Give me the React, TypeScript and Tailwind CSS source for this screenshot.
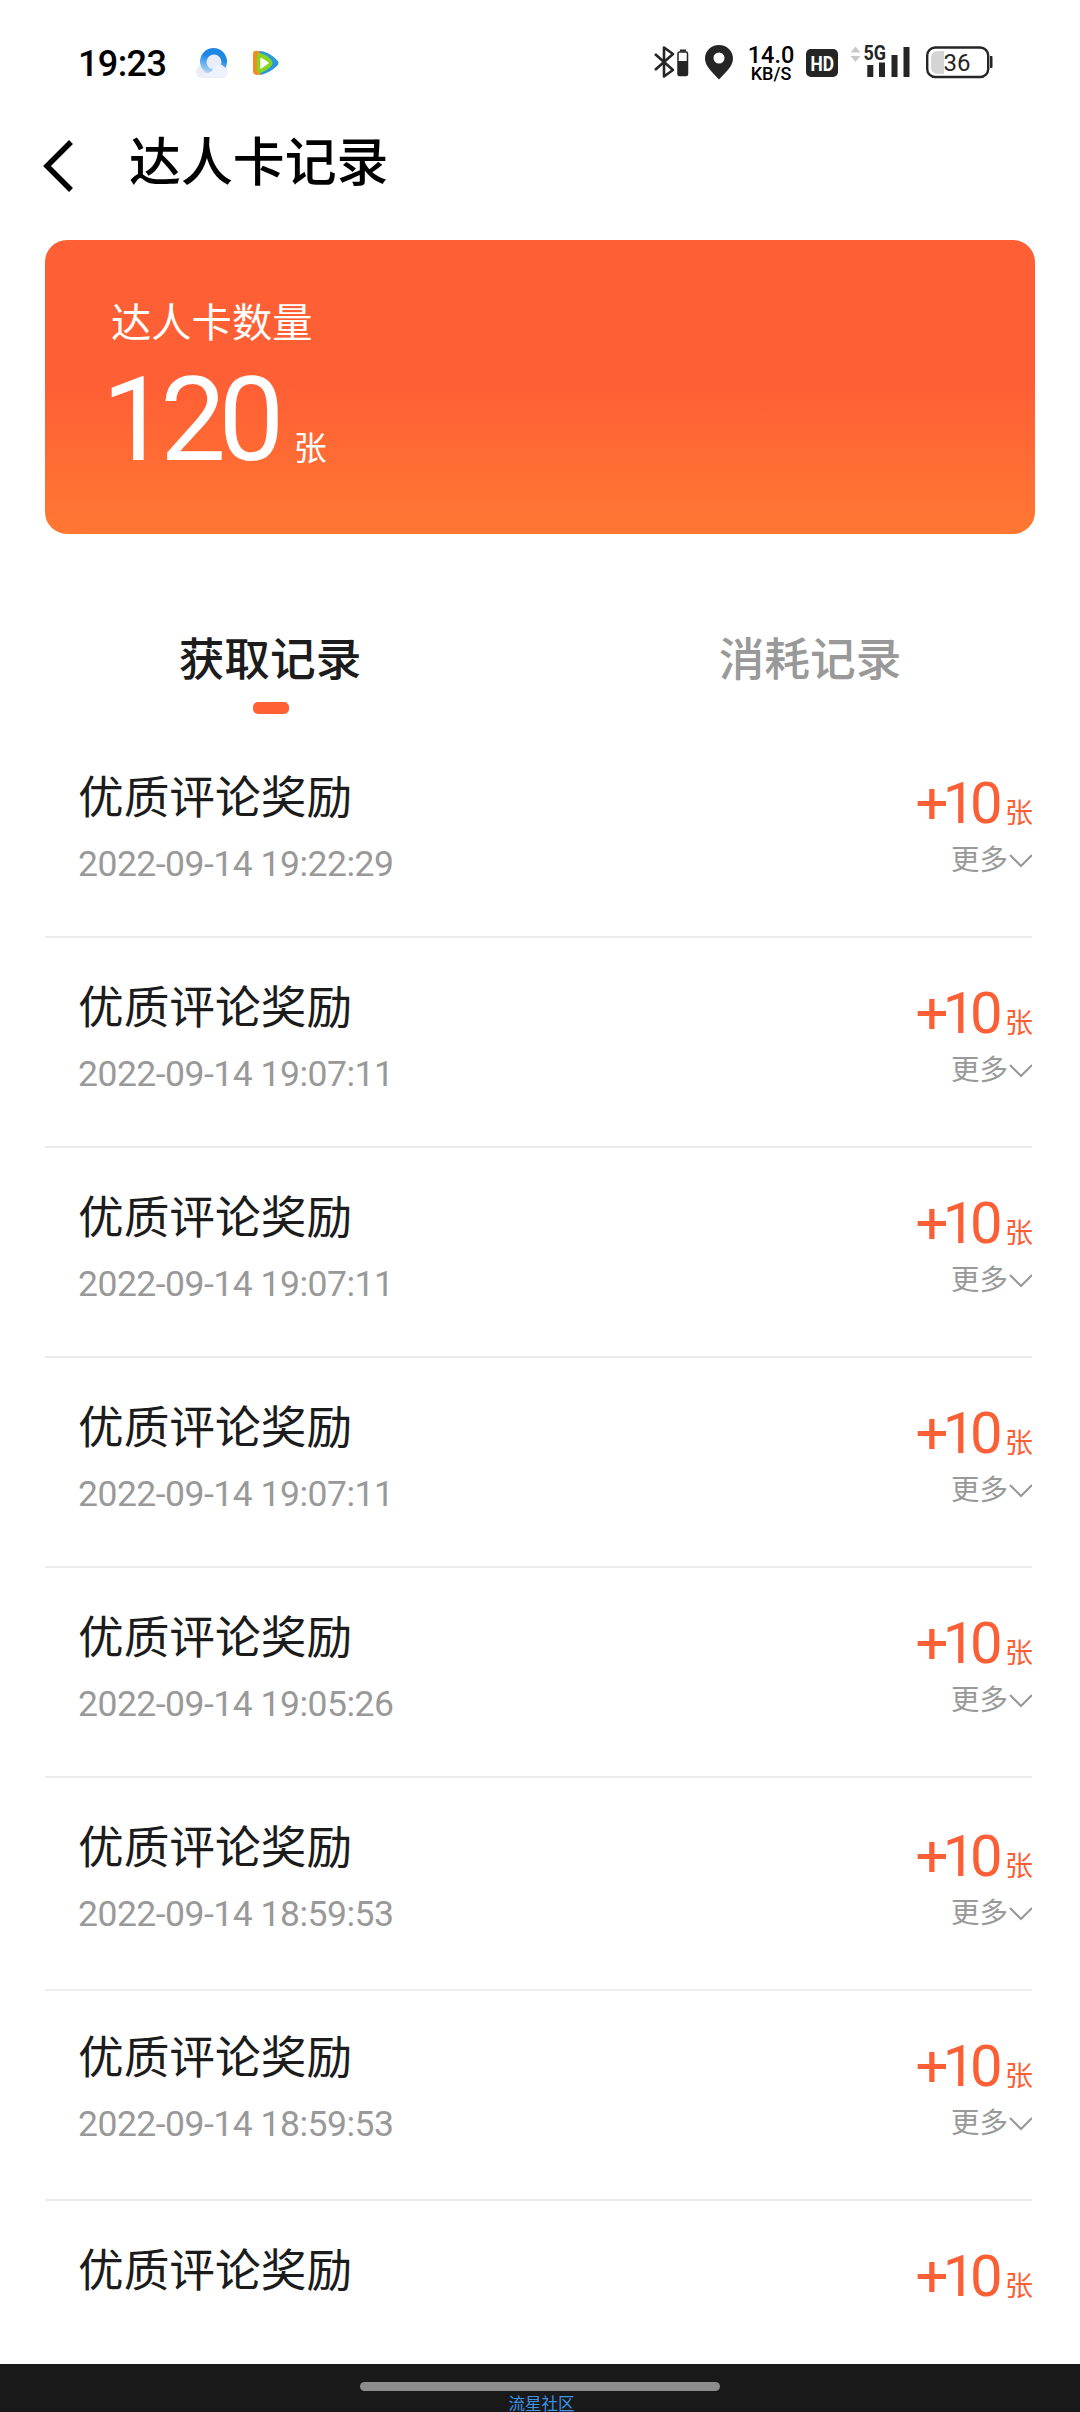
import React from "react";

const rows = [
  { time: "2022-09-14 19:22:29", h: "h-[210px]", left: "pt-0", right: "pt-0" },
  { time: "2022-09-14 19:07:11", h: "h-[210px]", left: "pt-0", right: "pt-0" },
  { time: "2022-09-14 19:07:11", h: "h-[210px]", left: "pt-0", right: "pt-0" },
  { time: "2022-09-14 19:07:11", h: "h-[210px]", left: "pt-0", right: "pt-0" },
  { time: "2022-09-14 19:05:26", h: "h-[210px]", left: "pt-0", right: "pt-0" },
  { time: "2022-09-14 18:59:53", h: "h-[213px]", left: "pt-0", right: "pt-[3px]" },
  { time: "2022-09-14 18:59:53", h: "h-[210px]", left: "-mt-[3px]", right: "pt-0" },
  { time: "", h: "h-[163px]", left: "pt-0", right: "pt-0" },
];

function StatusBar() {
  return (
    <header className="flex h-[124px] items-center justify-between pt-[2px] pr-[86px] pl-[78px]">
      <div className="flex items-center">
        <span className="w-[92px] pt-[1px] text-[36px] leading-[42px] font-medium tracking-[-0.600px] text-black">19:23</span>
        <svg className="ml-[23px]" width="38" height="36" viewBox="0 0 38 36">
          <defs>
            <linearGradient id="ring" x1="0.6" y1="0" x2="0.3" y2="1">
              <stop offset="0.35" stopColor="#1e88e5" />
              <stop offset="1" stopColor="#c3e0f8" />
            </linearGradient>
          </defs>
          <rect x="3" y="20" width="32" height="13" rx="6" fill="#eceef4" />
          <circle cx="20.500" cy="16.500" r="13.500" fill="url(#ring)" />
          <circle cx="21" cy="17" r="7.500" fill="#e6edf8" />
          <path d="M9 29Q18 29 21 23a7 7 0 0 1 8-3l6 5a6 6 0 0 1-3 6q-14 3-23-2z" fill="#eef2fa" />
        </svg>
        <svg className="ml-[20px]" width="32" height="30" viewBox="0 0 32 30">
          <path d="M2 6q0-4 5-3l5 1v22l-5 1q-5 0-5-4z" fill="#f58a1f" />
          <path d="M8 3q9 0 18 9q3 3 0 6q-9 8-17 9q6-12-1-24z" fill="#2b97dc" />
          <path d="M8 5q8 1 13 8q1 2 0 4q-5 6-12 8q-3 0-3-4V9q0-4 2-4z" fill="#86d61f" />
          <path d="M10 10.500l7 4.500l-7 5z" fill="#fff" stroke="#fff" strokeWidth="1.500" strokeLinejoin="round" />
        </svg>
      </div>
      <div className="flex items-center text-[#252525]">
        <svg width="36" height="36" viewBox="0 0 36 36">
          <path d="M2 9L20 25L11 31.500V2.500L20 9L2 25" fill="none" stroke="currentColor" strokeWidth="2.600" strokeLinejoin="round" />
          <rect x="25" y="7" width="9.500" height="23.500" rx="1.500" fill="none" stroke="currentColor" strokeWidth="1.500" />
          <path d="M27 4.500h6v2h-6z M25 16h9.500v14h-9.500z" fill="currentColor" />
        </svg>
        <svg className="ml-[15px]" width="30" height="36" viewBox="0 0 30 36">
          <path fillRule="evenodd" d="M15 0C7 0 1 6 1 13.500C1 21 8 27 15 34.500C22 27 29 21 29 13.500C29 6 23 0 15 0ZM15 7.500a5.500 5.500 0 1 1 0 11a5.500 5.500 0 0 1 0-11Z" fill="currentColor" />
        </svg>
        <div className="ml-[13px] flex w-[48px] flex-col items-center font-medium text-black">
          <span className="text-[23.500px] leading-[20px]">14.0</span>
          <span className="text-[18px] leading-[17px]">KB/S</span>
        </div>
        <svg className="ml-[11px]" width="32" height="28" viewBox="0 0 32 28">
          <rect width="32" height="28" rx="5" fill="#252525" />
          <text x="4.500" y="21.500" fontSize="21" fontWeight="700" fontFamily="Roboto" textLength="23.500" lengthAdjust="spacingAndGlyphs" fill="#fff">HD</text>
        </svg>
        <svg className="ml-[12px]" width="62" height="36" viewBox="0 0 62 36">
          <path d="M0.500 7.500l5-6l5 6z M0.500 11l5 6l5-6z" fill="#c9c9c9" />
          <text x="13.500" y="15" fontSize="20" fontWeight="700" fontFamily="Roboto" textLength="22.500" lengthAdjust="spacingAndGlyphs" fill="#252525">5G</text>
          <path d="M17.300 20h6v12h-6z M29 17.500h6v14.500h-6z M41.500 10h6v22h-6z M53.500 2h6v30h-6z" fill="currentColor" />
        </svg>
        <svg className="ml-[14px]" width="68" height="34" viewBox="0 0 68 34">
          <path d="M12 5H18V28H12Q5 28 5 21V12Q5 5 12 5Z" fill="#d4d4d4" />
          <rect x="1.200" y="1.500" width="61" height="29.500" rx="8" fill="none" stroke="#252525" strokeWidth="2.400" />
          <path d="M64 10h1.500q1 0 1 1v10q0 1-1 1h-1.500z" fill="#252525" />
          <text x="31" y="25" fontSize="24" fontFamily="Roboto" textAnchor="middle" fill="#252525">36</text>
        </svg>
      </div>
    </header>
  );
}

function Record({ row }: { row: (typeof rows)[number] }) {
  return (
    <li className={`flex justify-between overflow-hidden border-b-[2px] border-[#ececec] pl-[33px] last:border-b-0 ${row.h}`}>
      <div className={row.left}>
        <p className="mt-[38px] text-[45.700px] leading-[66px] text-[#1c1c1c]">优质评论奖励</p>
        {row.time && <p className="mt-[11px] text-[35.500px] leading-[42px] tracking-[-0.500px] text-[#999]">{row.time}</p>}
      </div>
      <div className={`flex flex-col items-end ${row.right}`}>
        <p className="-mr-[1px] mt-[41px] flex items-baseline leading-[68px] text-[#fb5f35]">
          <span className="text-[58px] tracking-[-5.500px]">+10</span>
          <span className="ml-[8px] text-[28px]">张</span>
        </p>
        {row.time && (
          <p className="-mt-[7px] flex items-center text-[28.500px] leading-[40px] text-[#999]">
            更多
            <svg className="-mr-[1px]" width="25" height="16" viewBox="0 0 25 16">
              <path d="M2 2l11 11L24 2" fill="none" stroke="currentColor" strokeWidth="2.200" />
            </svg>
          </p>
        )}
      </div>
    </li>
  );
}

export default function App() {
  return (
    <div className="flex h-[2412px] w-[1080px] flex-col overflow-hidden bg-white font-['Roboto','Noto_Sans_CJK_SC',sans-serif]">
      <StatusBar />
      <nav className="flex h-[116px] items-start pl-[42px]">
        <svg className="mt-[16px]" width="32" height="52" viewBox="0 0 32 52">
          <path d="M29 2L5 26L29 50" fill="none" stroke="#000" strokeWidth="5.500" />
        </svg>
        <h1 className="mt-[2px] ml-[55px] text-[51.900px] leading-[76px] font-medium text-black">达人卡记录</h1>
      </nav>
      <section className="mx-[45px] h-[294px] shrink-0 rounded-[22px] bg-linear-to-b from-[#ff5f34] from-50% to-[#ff7733] pl-[66px] text-white">
        <h2 className="pt-[54px] text-[40.300px] leading-[60px]">达人卡数量</h2>
        <p className="flex items-baseline pt-[4px] leading-[124px]">
          <span className="-ml-[9px] text-[117px] tracking-[-7.500px]">120</span>
          <span className="ml-[17px] text-[33px]">张</span>
        </p>
      </section>
      <div className="mt-[94px] grid h-[100px] shrink-0 grid-cols-2 text-center text-[45.700px] leading-[66px] font-medium">
        <div className="flex flex-col items-center text-[#1c1c1c]">
          获取记录
          <span className="mt-[8px] ml-[2px] h-[12px] w-[36px] rounded-[5px] bg-[#ff6034]" />
        </div>
        <div className="text-[#999]">消耗记录</div>
      </div>
      <ul className="mr-[48px] ml-[45px] h-[1636px] shrink-0">
        {rows.map((row, i) => (
          <Record key={i} row={row} />
        ))}
      </ul>
      <footer className="flex h-[48px] shrink-0 flex-col items-center bg-[#191919]">
        <span className="mt-[18px] h-[9px] w-[360px] shrink-0 rounded-full bg-[#8c8c8c]" />
        <span className="mt-[4px] ml-[3px] text-[16.500px] leading-[20px] text-[#3c94e6]">流星社区</span>
      </footer>
    </div>
  );
}
